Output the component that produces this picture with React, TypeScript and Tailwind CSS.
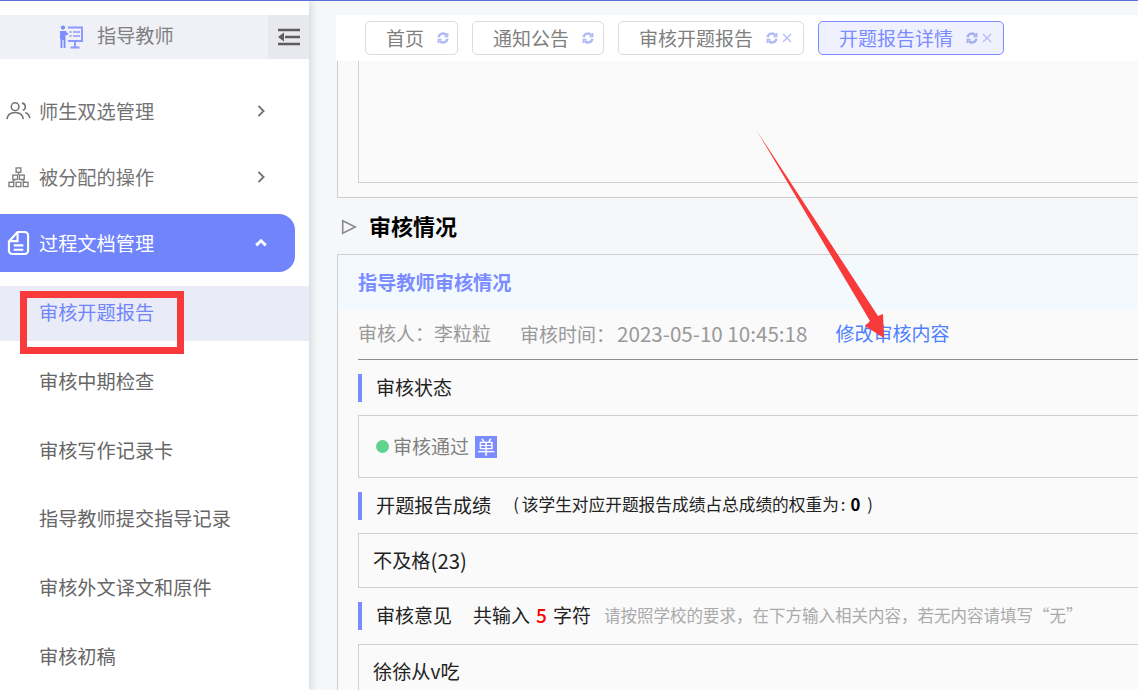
import React from "react";

const font = { fontFamily: '"Noto Sans CJK SC", "Liberation Sans", sans-serif' };

function Refresh({ className }: { className: string }) {
  return (
    <svg viewBox="0 0 12 12" className={className} fill="none" stroke="currentColor" strokeWidth="2.4">
      <path d="M1.6 5.2A4.5 4.5 0 0 1 9.4 3" />
      <path d="M10.4 6.8A4.5 4.5 0 0 1 2.6 9" />
      <path d="M10.6 1v3.4H7.4" strokeWidth="1.6" />
      <path d="M1.4 11V7.6h3.2" strokeWidth="1.6" />
    </svg>
  );
}

function Tab({ label, close, active, w }: { label: string; close?: boolean; active?: boolean; w: string }) {
  return (
    <div
      className={`flex h-[34px] items-center rounded-[5px] border pl-[20px] text-[19px] ${w} ${
        active ? "border-[#7a8cff] bg-[#eff1ff] text-[#7b8cff]" : "border-[#dcdcdc] bg-white text-[#808080]"
      }`}
    >
      <span className="whitespace-nowrap">{label}</span>
      <Refresh className={`ml-[13px] h-[12px] w-[12px] shrink-0 ${active ? "text-[#a4aeea]" : "text-[#aeb9f5]"}`} />
      {close && (
        <svg viewBox="0 0 10 10" className="ml-[4px] h-[10px] w-[10px]" fill="none" stroke="#b4bdf5" strokeWidth="1.4">
          <path d="M1 1l8 8M9 1 1 9" />
        </svg>
      )}
    </div>
  );
}

function SideItem({ label, icon, open }: { label: string; icon: React.ReactNode; open?: boolean }) {
  return (
    <div
      className={`flex h-[58px] w-[295px] items-center rounded-r-[16px] pl-[6px] text-[19.2px] ${
        open ? "bg-[#7085fb] text-white" : "text-[#737373]"
      }`}
    >
      <span className="flex w-[33px] shrink-0">{icon}</span>
      <span className="whitespace-nowrap">{label}</span>
      <svg viewBox="0 0 10 10" className="ml-[99px] h-[16px] w-[16px]" fill="none" stroke="currentColor" strokeWidth={open ? 1.8 : 1.2}>
        {open ? <path d="M2 6.5 5 3.6l3 2.9" /> : <path d="M3.4 1.8 6.6 5 3.4 8.2" />}
      </svg>
    </div>
  );
}

function SubItem({ label, active }: { label: string; active?: boolean }) {
  return (
    <div
      className={`flex h-[55px] items-center pb-[2px] pl-[39px] text-[19.2px] whitespace-nowrap ${
        active ? "bg-[#e9ebf7] text-[#7085fb]" : "text-[#666666]"
      }`}
    >
      {label}
    </div>
  );
}

function Label({ children, className }: { children: React.ReactNode; className: string }) {
  return <div className={`flex h-[28px] items-center border-l-[4px] border-[#7a8cff] pb-[2px] whitespace-nowrap ${className}`}>{children}</div>;
}

export default function App() {
  return (
    <div style={font} className="relative flex h-[690px] w-[1138px] flex-col overflow-hidden border-t border-[#5a6fdc] bg-[#f5f7f9]">
      <div className="flex min-h-0 flex-1">
        <aside className="flex w-[309px] shrink-0 flex-col bg-white shadow-[3px_0_6px_rgba(120,130,140,0.22)]">
          <div className="h-[14px] shrink-0" />
          <div className="flex h-[44px] shrink-0 items-center bg-[#f0f1f7]">
            <svg viewBox="0 0 24 24" className="ml-[59px] h-[24px] w-[24px]" fill="none">
              <circle cx="4" cy="2.6" r="2.1" fill="#7c8cff" />
              <path d="M1 6h6l1 2h1v2H6.5v13H4.6v-8H3.4v8H1.5v-9H1z" fill="#7c8cff" />
              <path d="M9 2.5h14v13.5H9M16 16v6M11.5 22.5h9" stroke="#8a98ff" strokeWidth="1.9" />
              <path d="M14 7h7M14 11h7" stroke="#8a98ff" strokeWidth="1.5" />
              <path d="M10.5 7h2M10.5 11h2" stroke="#7c8cff" strokeWidth="1.5" />
            </svg>
            <span className="ml-[14px] pb-[3px] text-[19.2px] leading-none text-[#808080]">指导教师</span>
            <div className="ml-auto flex h-full w-[41px] items-center justify-center bg-[#e8e9ef]">
              <svg viewBox="0 0 22 18" className="h-[18px] w-[22px]" fill="none" stroke="#5c5c5c" strokeWidth="2.4">
                <path d="M0 2h22M7 9h15M0 16h22" />
                <path d="M6 4.5v9L0 9z" fill="#5c5c5c" stroke="none" />
              </svg>
            </div>
          </div>
          <div className="flex flex-col pt-[23px]">
            <SideItem
              label="师生双选管理"
              icon={
                <svg viewBox="0 0 26 20" className="h-[20px] w-[25px]" fill="none" stroke="#737373" strokeWidth="1.6">
                  <circle cx="9.5" cy="5.5" r="4" />
                  <path d="M1 18.5c.6-4.6 4-7 8.5-7s7.9 2.4 8.5 7" />
                  <path d="M16.5 1.8a3.8 3.8 0 0 1 1 7.4M20 11.5c2.6 1 4.3 3 4.8 6" />
                </svg>
              }
            />
            <div className="h-[8px]" />
            <SideItem
              label="被分配的操作"
              icon={
                <svg viewBox="0 0 22 22" className="ml-[2px] h-[21px] w-[21px]" fill="none" stroke="#7d7d7d" strokeWidth="1.4">
                  <rect x="8.5" y="1" width="5" height="4.5" />
                  <rect x="5" y="8.5" width="5" height="4.5" />
                  <rect x="12" y="8.5" width="5" height="4.5" />
                  <rect x="1" y="16" width="5" height="4.5" />
                  <rect x="8.5" y="16" width="5" height="4.5" />
                  <rect x="16" y="16" width="5" height="4.5" />
                  <path d="M11 5.5v3M7.5 13l-3 3M14.5 13l3 3" />
                </svg>
              }
            />
            <div className="h-[8px]" />
            <SideItem
              open
              label="过程文档管理"
              icon={
                <svg viewBox="0 0 24 26" className="ml-[1px] h-[26px] w-[23px]" fill="none" stroke="white" strokeWidth="2.2">
                  <path d="M11 1.5h7.5a3.5 3.5 0 0 1 3.5 3.5v16a3.5 3.5 0 0 1-3.5 3.5h-13A3.5 3.5 0 0 1 2 21v-9.5z" strokeLinejoin="round" />
                  <path d="M11 2v9H3" />
                  <path d="M7 15.5h10M7 20h10" />
                </svg>
              }
            />
            <div className="h-[14px]" />
            <div className="flex flex-col gap-[13.8px]">
              <SubItem active label="审核开题报告" />
              <SubItem label="审核中期检查" />
              <SubItem label="审核写作记录卡" />
              <SubItem label="指导教师提交指导记录" />
              <SubItem label="审核外文译文和原件" />
              <SubItem label="审核初稿" />
            </div>
          </div>
        </aside>

        <main className="min-w-0 flex-1 pl-[27px] pt-[14px]">
          <div className="flex h-[46px] w-[802px] items-center gap-[14px] bg-white pl-[29px]">
            <Tab label="首页" w="w-[93px]" />
            <Tab label="通知公告" w="w-[132px]" />
            <Tab label="审核开题报告" w="w-[186px]" close />
            <Tab label="开题报告详情" w="w-[186px]" close active />
          </div>

          <div className="ml-[1px] w-[900px]">
            <div className="h-[137px] border-b border-l border-[#cfcfcf] bg-[#fafafa] pl-[20px]">
              <div className="h-[122px] border-b border-l border-[#cfcfcf] bg-[#fafafa]" />
            </div>

            <div className="flex h-[56px] items-center pb-[2px] pl-[4px]">
              <svg viewBox="0 0 14 14" className="mt-[3px] h-[16px] w-[16px]" fill="none" stroke="#8a8a8a" strokeWidth="1.4">
                <path d="M1.5 1.5 12.5 7 1.5 12.5z" />
              </svg>
              <span className="ml-[12px] text-[22px] font-bold text-black">审核情况</span>
            </div>

            <div className="border-l border-t border-[#cfcfcf] bg-[#fafafa]">
              <div className="flex h-[55px] items-center bg-[#f2f9ff] pl-[20px] text-[19.2px] font-bold text-[#7a8cff]">指导教师审核情况</div>
              <div className="ml-[20px] flex h-[50px] items-center border-b border-[#8d8d8d] pb-[2px] text-[19px] whitespace-nowrap text-[#999999]">
                <span>审核人：李粒粒</span>
                <span className="ml-[29px]">
                  审核时间：<span className="ml-[2px] text-[20.6px]">2023-05-10 10:45:18</span>
                </span>
                <span className="ml-[28px] text-[#4d80ff]">修改审核内容</span>
              </div>

              <div className="pl-[20px]">
                <Label className="mt-[14px] pl-[14px] text-[19px] text-[#222222]">审核状态</Label>
                <div className="mt-[13px] flex h-[63px] items-center border border-r-0 border-[#cfcfcf] pl-[17px] text-[19px] text-[#808080]">
                  <span className="h-[13px] w-[13px] rounded-full bg-[#5fd38d]" />
                  <span className="ml-[4px]">审核通过</span>
                  <span className="ml-[6px] flex h-[22px] w-[22px] items-center justify-center bg-[#7a8cff] text-[18px] text-white">单</span>
                </div>

                <Label className="mt-[14px] pl-[14px] text-[19.2px] text-[#222222]">
                  开题报告成绩
                  <span className="ml-[22px] text-[16.7px]">
                    <span className="mr-[3px]">(</span>该学生对应开题报告成绩占总成绩的权重为
                    <span className="mx-[2px]">:</span>
                    <b className="ml-[3px] text-black">0</b>
                    <span className="ml-[7px]">)</span>
                  </span>
                </Label>
                <div className="mt-[13px] flex h-[55px] items-center border border-r-0 border-[#cfcfcf] pl-[14px] text-[19.2px] text-[#222222]">
                  不及格<span className="text-[20.4px]">(23)</span>
                </div>

                <Label className="mt-[14px] pl-[14px] text-[19px] text-[#222222]">
                  审核意见
                  <span className="ml-[21px]">共输入</span>
                  <span className="ml-[6px] mr-[6px] font-medium text-[#ff0000]">5</span>
                  <span>字符</span>
                  <span className="ml-[13px] text-[16.5px] text-[#aaaaaa]">请按照学校的要求，在下方输入相关内容，若无内容请填写“无”</span>
                </Label>
                <div className="mt-[14px] flex h-[55px] items-center border border-r-0 border-[#cfcfcf] pl-[14px] text-[19.2px] text-[#222222]">徐徐从v吃</div>
              </div>
            </div>
          </div>
        </main>
      </div>

      <div className="absolute left-[20px] top-[290px] h-[63px] w-[164px] border-[7px] border-[#f93a3a]" />
      <svg className="pointer-events-none absolute left-0 top-[-1px] h-[690px] w-[1138px]" viewBox="0 0 1138 690">
        <polygon points="757,131 878,316 883,314 884,338 865,326 870,321" fill="#f93a3a" />
      </svg>
    </div>
  );
}
